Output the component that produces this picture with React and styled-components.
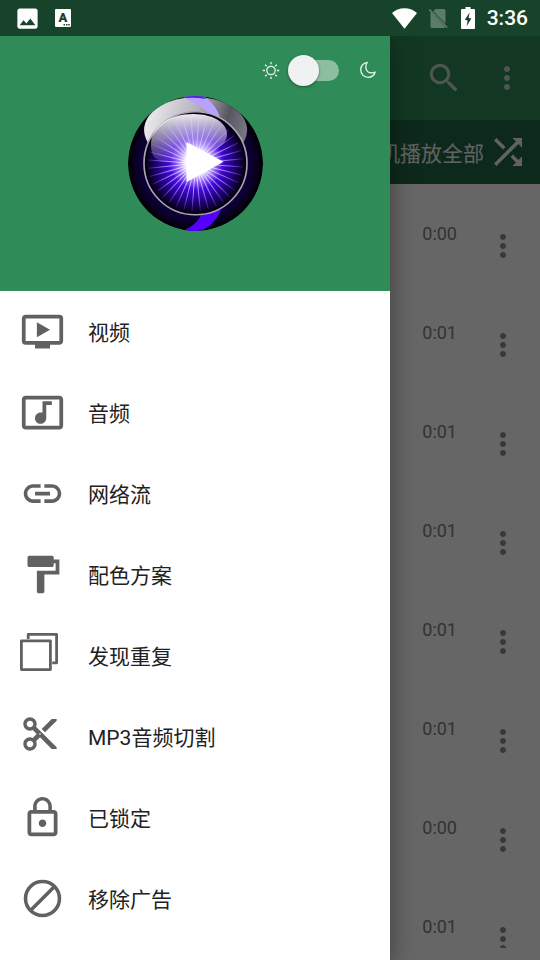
import React, { useState } from 'react'
import styled, { createGlobalStyle } from 'styled-components'
import {
  MdOndemandVideo,
  MdLink,
  MdFormatPaint,
  MdContentCut,
  MdSearch,
  MdMoreVert,
  MdShuffle,
  MdImage,
} from 'react-icons/md'

const times = ['0:00', '0:01', '0:01', '0:01', '0:01', '0:01', '0:00', '0:01']

const menu = [
  { label: '视频', icon: <MdOndemandVideo size={45} /> },
  { label: '音频', icon: <MusicIcon /> },
  { label: '网络流', icon: <MdLink size={45} /> },
  { label: '配色方案', icon: <MdFormatPaint size={45} /> },
  { label: '发现重复', icon: <DuplicateIcon /> },
  { label: 'MP3音频切割', icon: <MdContentCut size={40} /> },
  { label: '已锁定', icon: <LockIcon /> },
  { label: '移除广告', icon: <BlockIcon /> },
]

export default function App() {
  const [dark, setDark] = useState(false)

  return (
    <Screen>
      <GlobalStyle />
      <StatusBar>
        <StatusGroup $gap={14}>
          <MdImage size={27} />
          <InputIcon />
        </StatusGroup>
        <StatusGroup $gap={12}>
          <WifiIcon />
          <NoSimIcon />
          <BatteryIcon />
          <Clock>3:36</Clock>
        </StatusGroup>
      </StatusBar>

      <Body>
        <Page>
          <Toolbar>
            <IconButton aria-label="搜索"><MdSearch size={38} /></IconButton>
            <IconButton aria-label="更多"><MdMoreVert size={36} /></IconButton>
          </Toolbar>
          <ShuffleBar>
            随机播放全部
            <MdShuffle size={42} />
          </ShuffleBar>
          <List>
            {times.map((time, i) => (
              <Row key={i}>
                <Time>{time}</Time>
                <RowButton aria-label="更多"><MdMoreVert size={36} /></RowButton>
              </Row>
            ))}
          </List>
        </Page>

        <Scrim />

        <Drawer>
          <DrawerHeader>
            <ThemeRow>
              <SunIcon />
              <Switch
                type="checkbox"
                role="switch"
                aria-label="夜间模式"
                checked={dark}
                onChange={(e) => setDark(e.target.checked)}
              />
              <MoonIcon />
            </ThemeRow>
            <Logo />
          </DrawerHeader>
          <Menu>
            {menu.map((item) => (
              <li key={item.label}>
                <MenuButton>
                  <IconSlot>{item.icon}</IconSlot>
                  <Label>{item.label}</Label>
                </MenuButton>
              </li>
            ))}
          </Menu>
        </Drawer>
      </Body>
    </Screen>
  )
}

function MusicIcon() {
  return (
    <svg width="45" height="45" viewBox="0 0 24 24" fill="currentColor">
      <path d="M21 3H3c-1.100 0-2 .9-2 2v14c0 1.100.9 2 2 2h18c1.100 0 2-.9 2-2V5c0-1.100-.9-2-2-2zm0 16H3V5h18v14zM8 15c0-1.660 1.340-3 3-3 .35 0 .69.07 1 .18V6h5v2h-3v7.030c-.02 1.640-1.350 2.970-3 2.970-1.660 0-3-1.340-3-3z" />
    </svg>
  )
}

function DuplicateIcon() {
  return (
    <svg width="38" height="38" viewBox="0 0 38 38" fill="none" stroke="currentColor" strokeWidth="2.800" strokeLinejoin="round">
      <rect x="1.400" y="7.800" width="29" height="28.800" />
      <path d="M8.200 6V1.400h28.400v28.400h-4.400" />
    </svg>
  )
}

function LockIcon() {
  return (
    <svg width="45" height="45" viewBox="0 0 24 24" fill="currentColor">
      <path d="M18 8h-1V6c0-2.760-2.240-5-5-5S7 3.240 7 6v2H6c-1.100 0-2 .9-2 2v10c0 1.100.9 2 2 2h12c1.100 0 2-.9 2-2V10c0-1.100-.9-2-2-2zM8.900 6c0-1.710 1.390-3.100 3.100-3.100s3.100 1.390 3.100 3.100v2H8.900V6zM18 20H6V10h12v10zm-6-3c1.100 0 2-.9 2-2s-.9-2-2-2-2 .9-2 2 .9 2 2 2z" />
    </svg>
  )
}

function BlockIcon() {
  return (
    <svg width="45" height="45" viewBox="0 0 24 24" fill="none" stroke="currentColor" strokeWidth="1.900">
      <circle cx="12" cy="12" r="9.050" />
      <path d="M5.600 18.400L18.400 5.600" />
    </svg>
  )
}

function InputIcon() {
  return (
    <svg width="16" height="18" viewBox="0 0 16 18">
      <rect width="16" height="18" rx="1" fill="#fff" />
      <text x="8" y="13" textAnchor="middle" fontFamily="Roboto, sans-serif" fontSize="13" fontWeight="900" fill="#18432b">A</text>
      <path d="M8.500 15h1.500v1.500H8.500zM11 15h1.500v1.500H11zM13.300 15h1.500v1.500h-1.500z" fill="#18432b" />
    </svg>
  )
}

function WifiIcon() {
  return (
    <svg width="26" height="21" viewBox="0 0 26 21" fill="#fff">
      <path d="M13.500 20.800L1 5C4.500 2 8.500.2 13.500.2S22.500 2 26 5z" />
    </svg>
  )
}

function NoSimIcon() {
  return (
    <svg width="20" height="21" viewBox="0 0 20 21">
      <path d="M6.500 1H15a1.500 1.500 0 0 1 1.500 1.500v13.300L4.300 3.200zM1.500 3.500L16 19q-.4 1-1 1H3a1.500 1.500 0 0 1-1.500-1.500z" fill="#5d7b6b" />
      <path d="M.4 1.600l17.800 18" stroke="#5d7b6b" strokeWidth="1.600" />
    </svg>
  )
}

function BatteryIcon() {
  return (
    <svg width="14" height="22" viewBox="0 0 14 22">
      <path d="M4.500 0h5v2H13a1 1 0 0 1 1 1v18a1 1 0 0 1-1 1H1a1 1 0 0 1-1-1V3a1 1 0 0 1 1-1h3.500z" fill="#fff" />
      <path d="M8.600 5.500L3.800 12.800l2.800.6L5.600 19.200 10.400 11.600l-2.800-.6z" fill="#18432b" />
    </svg>
  )
}

function SunIcon() {
  return (
    <svg width="20" height="20" viewBox="0 0 20 20" fill="none" stroke="#e8f5ed" strokeWidth="1.300">
      <circle cx="10" cy="10.500" r="4.200" />
      <path d="M10 2v2.200M10 16.800V19M1.800 10.500H4M16 10.500h2.200M4.200 4.700l1.500 1.500M14.300 14.800l1.500 1.500M4.200 16.300l1.500-1.500M14.300 6.200l1.500-1.500" />
    </svg>
  )
}

function MoonIcon() {
  return (
    <svg width="20" height="20" viewBox="0 0 20 20" fill="none" stroke="#e8f5ed" strokeWidth="1.300" strokeLinejoin="round">
      <path d="M9.200 2.300C5.500 2.800 2.700 5.900 2.700 9.800c0 4.200 3.300 7.500 7.400 7.500 3.400 0 6.200-2.200 7.100-5.300-1 .6-2.200.9-3.400.9-3.500 0-6-2.500-6-5.900 0-1.800.5-3.400 1.400-4.700z" />
    </svg>
  )
}

function Logo() {
  const rays = Array.from({ length: 36 }, (_, i) => i * 10 + 4)
  return (
    <svg width="135" height="135" viewBox="0 0 135 135">
      <defs>
        <radialGradient id="shell">
          <stop offset="0.7" stopColor="#10004a" />
          <stop offset="0.87" stopColor="#0b0028" />
          <stop offset="1" stopColor="#000004" />
        </radialGradient>
        <radialGradient id="disc">
          <stop offset="0" stopColor="#d9c4ff" />
          <stop offset="0.3" stopColor="#7a3cff" />
          <stop offset="0.55" stopColor="#4208d8" />
          <stop offset="0.8" stopColor="#1f0075" />
          <stop offset="1" stopColor="#07001c" />
        </radialGradient>
        <radialGradient id="glow">
          <stop offset="0" stopColor="#fff" />
          <stop offset="0.45" stopColor="#fff" stopOpacity="0.85" />
          <stop offset="1" stopColor="#a880ff" stopOpacity="0" />
        </radialGradient>
        <radialGradient id="ray" gradientUnits="userSpaceOnUse" cx="67.500" cy="67.500" r="50">
          <stop offset="0.3" stopColor="#fff" stopOpacity="0.9" />
          <stop offset="0.7" stopColor="#b698ff" stopOpacity="0.65" />
          <stop offset="1" stopColor="#8b60ff" stopOpacity="0.1" />
        </radialGradient>
        <linearGradient id="gloss" x1="0" y1="0.2" x2="1" y2="0.4">
          <stop offset="0" stopColor="#f0f0f0" />
          <stop offset="0.5" stopColor="#b4b0bd" />
          <stop offset="0.8" stopColor="#57555f" />
          <stop offset="1" stopColor="#77757f" />
        </linearGradient>
        <linearGradient id="innerGloss" x1="0.3" y1="0" x2="0.4" y2="1">
          <stop offset="0" stopColor="#fff" stopOpacity="0.95" />
          <stop offset="0.5" stopColor="#d8d0ee" stopOpacity="0.6" />
          <stop offset="1" stopColor="#b8a8e8" stopOpacity="0.12" />
        </linearGradient>
        <clipPath id="ball"><circle cx="67.500" cy="67.500" r="67.500" /></clipPath>
      </defs>
      <g clipPath="url(#ball)">
        <circle cx="67.500" cy="67.500" r="67.500" fill="url(#shell)" />
        <ellipse cx="67.600" cy="34" rx="51.500" ry="33" fill="url(#gloss)" />
        <path d="M53 0C64 5 74 11 80 17l12 4C89 12 83 5 75 0z" fill="#b9a2ff" />
        <path d="M53 0h22l3 3q-10-2-21-1z" fill="#4a20e0" />
        <path d="M93 114C88 125 80 133 71 135H55C65 130 71 125 74 117z" fill="#5500ff" />
      </g>
      <circle cx="67.500" cy="67.300" r="51.500" fill="#05000f" stroke="#aaa5b3" strokeWidth="1.600" />
      <circle cx="67.500" cy="67.500" r="49" fill="url(#disc)" />
      <g stroke="url(#ray)" strokeWidth="1">
        {rays.map((deg) => (
          <path key={deg} d="M67.500 67.500L67.600 20" transform={`rotate(${deg} 67.500 67.500)`} />
        ))}
      </g>
      <path d="M23 49C23 31 41 18 65 18c23 0 35 11 34 21-1 11-13 14-29 18-20 5-26 9-37 8-7-1-10-8-10-16z" fill="url(#innerGloss)" />
      <circle cx="69" cy="66" r="27" fill="url(#glow)" />
      <path d="M58.500 46L95.500 65.700 58.500 86z" fill="#fff" />
    </svg>
  )
}

const GlobalStyle = createGlobalStyle`
  * {
    box-sizing: border-box;
  }
  body {
    margin: 0;
    font-family: Roboto, 'Noto Sans CJK SC', sans-serif;
  }
  button {
    padding: 0;
    border: none;
    background: none;
    font: inherit;
    color: inherit;
    cursor: pointer;
  }
  svg {
    display: block;
    flex-shrink: 0;
  }
`
const Screen = styled.div`
  display: flex;
  flex-direction: column;
  height: 100vh;
  overflow: hidden;
`
const StatusBar = styled.header`
  display: flex;
  justify-content: space-between;
  align-items: center;
  height: 36px;
  padding: 0 12px 0 14px;
  background: #18432b;
  color: #fff;
`
const StatusGroup = styled.div`
  display: flex;
  align-items: center;
  gap: ${(props) => props.$gap}px;
`
const Clock = styled.time`
  font-size: 21px;
  font-weight: 500;
  line-height: 24px;
`
const Body = styled.div`
  position: relative;
  flex: 1;
  min-height: 0;
  overflow: hidden;
`
const Page = styled.main`
  display: flex;
  flex-direction: column;
  height: 100%;
  padding-bottom: 12px;
  background: #fff;
`
const Toolbar = styled.div`
  display: flex;
  flex-shrink: 0;
  justify-content: flex-end;
  align-items: center;
  gap: 26px;
  height: 84px;
  padding-right: 15px;
  background: #2f8c58;
`
const IconButton = styled.button`
  color: #c8d2cc;
`
const ShuffleBar = styled.button`
  && {
    display: flex;
    flex-shrink: 0;
    justify-content: flex-end;
    align-items: center;
    gap: 3px;
    height: 64px;
    padding-right: 11px;
    background: #216744;
    color: #f5f5f5;
    font-size: 21px;
  }
`
const List = styled.ul`
  flex: 1;
  min-height: 0;
  margin: 0;
  padding: 0;
  overflow: hidden;
  list-style: none;
`
const Row = styled.li`
  display: flex;
  justify-content: flex-end;
  align-items: flex-start;
  gap: 28px;
  height: 99px;
  padding: 38px 19px 0 0;
`
const Time = styled.span`
  font-size: 18px;
  line-height: 24px;
  color: #808080;
`
const RowButton = styled.button`
  && {
    margin-top: 6px;
    color: #8c8c8c;
  }
`
const Scrim = styled.div`
  position: absolute;
  inset: 0;
  background: rgba(0, 0, 0, 0.6);
`
const Drawer = styled.aside`
  position: absolute;
  top: 0;
  bottom: 0;
  left: 0;
  width: calc(100% - 150px);
  background: #fff;
  box-shadow: 0 8px 24px rgba(0, 0, 0, 0.4);
`
const DrawerHeader = styled.div`
  display: flex;
  flex-direction: column;
  align-items: center;
  gap: 10px;
  padding: 18px 0 60px;
  background: #2f8c59;
`
const ThemeRow = styled.div`
  display: flex;
  align-self: flex-end;
  align-items: center;
  height: 32px;
  padding-right: 12px;
  gap: 7px;

  svg:last-child{
    margin-left: 11px;
  }
`
const Switch = styled.input`
  appearance: none;
  position: relative;
  width: 52px;
  height: 32px;
  margin: 0;
  cursor: pointer;

  &::before{
    content: '';
    position: absolute;
    top: 6px;
    left: 10px;
    right: 1px;
    height: 21px;
    border-radius: 11px;
    background: #8bbfa0;
  }
  &::after{
    content: '';
    position: absolute;
    top: 1px;
    left: 0;
    width: 31px;
    height: 31px;
    border-radius: 50%;
    background: #f0f2f1;
    box-shadow: 0 1px 3px rgba(0, 0, 0, 0.4);
  }
  &:checked::after{
    left: 21px;
  }
`
const Menu = styled.ul`
  margin: 0;
  padding: 0;
  list-style: none;
`
const MenuButton = styled.button`
  && {
    display: flex;
    align-items: center;
    gap: 23px;
    width: 100%;
    height: 81px;
    padding-left: 20px;
    color: #212121;
    text-align: left;
  }
`
const IconSlot = styled.span`
  width: 45px;
  height: 45px;
  color: #616161;
`
const Label = styled.span`
  padding-top: 2px;
  font-size: 21px;
  line-height: 24px;
`
